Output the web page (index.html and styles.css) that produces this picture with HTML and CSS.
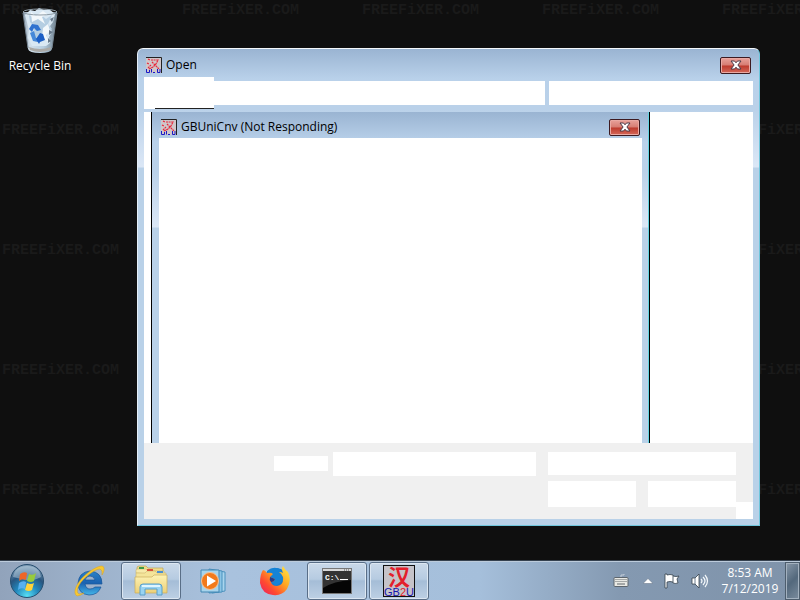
FILE: index.html
```html
<!DOCTYPE html>
<html lang="en">
<head>
    <meta charset="UTF-8">
    <meta name="viewport" content="width=device-width, initial-scale=1.0">
    <title>GBUniCnv</title>
    <link rel="stylesheet" href="styles.css">
</head>
<body>

<!-- shared icons -->
<svg class="defs" aria-hidden="true">
    <defs>
        <linearGradient id="bin" x1="0" x2="1" y1="0" y2="0">
            <stop offset="0" stop-color="#8d9fb0"/><stop offset=".2" stop-color="#d2e0eb"/>
            <stop offset=".6" stop-color="#b7cee0"/><stop offset="1" stop-color="#70828f"/>
        </linearGradient>
        <radialGradient id="orb" cx=".5" cy=".95" r=".9">
            <stop offset="0" stop-color="#58e0f5"/><stop offset=".4" stop-color="#2286bb"/>
            <stop offset=".7" stop-color="#28557f"/><stop offset="1" stop-color="#7c9bb5"/>
        </radialGradient>
        <linearGradient id="ie" x1="0" x2="0" y1="0" y2="1">
            <stop offset="0" stop-color="#2b83c9"/><stop offset=".5" stop-color="#1b62b0"/><stop offset="1" stop-color="#43b5e8"/>
        </linearGradient>
        <linearGradient id="folder" x1="0" x2="0" y1="0" y2="1">
            <stop offset="0" stop-color="#fdf3b5"/><stop offset="1" stop-color="#ecd078"/>
        </linearGradient>
        <linearGradient id="fox" x1="1" x2="0" y1="0" y2="1">
            <stop offset="0" stop-color="#fff04a"/><stop offset=".4" stop-color="#ffa522"/>
            <stop offset=".7" stop-color="#ff4a30"/><stop offset="1" stop-color="#e81a68"/>
        </linearGradient>
        <symbol id="app" viewBox="0 0 16 16">
            <rect width="16" height="16" fill="#d0c6c9"/>
            <path d="M0 .5H15.5V16" fill="none" stroke="#222"/>
            <path d="M2 2l2 1M1 6l2 1M5 3h7l-2 4-3 3-4 2M6 5l3 3 4 4M2 11l3-3" fill="none" stroke="#e8283c" stroke-width="1.2" stroke-dasharray="2 .6"/>
            <path d="M.5 12v3.500h3V13M5.500 12v3.500M7 15.500h2M11.500 12v3.500h2.500V12" fill="none" stroke="#1a1ac8"/>
        </symbol>
        <symbol id="cross" viewBox="0 0 12 10">
            <path d="M1 1h3.500L6 2.800 7.500 1H11L7.900 5 11 9H7.500L6 7.200 4.500 9H1l3.100-4z" fill="#fff" stroke="#4b3a48" stroke-width="1"/>
        </symbol>
    </defs>
</svg>

<main class="desktop">
    <div class="wallpaper" aria-hidden="true">
        <span>FREEFiXER.COM</span><span>FREEFiXER.COM</span><span>FREEFiXER.COM</span><span>FREEFiXER.COM</span><span>FREEFiXER.COM</span>
        <span>FREEFiXER.COM</span><span class="last">FREEFiXER.COM</span>
        <span>FREEFiXER.COM</span><span class="last">FREEFiXER.COM</span>
        <span>FREEFiXER.COM</span><span class="last">FREEFiXER.COM</span>
        <span>FREEFiXER.COM</span><span class="last">FREEFiXER.COM</span>
    </div>

    <a class="shortcut" href="#">
        <svg width="38" height="46" viewBox="0 0 38 46" aria-hidden="true">
            <path d="M2 4L7 41Q8 45 19 45T31 41L36 4Z" fill="url(#bin)"/>
            <path d="M4 7l5-5 5 1 4-3 5 2 5-1 6 5-2 8-3 4 2 6-3 5 1 6-4 3H11L7 30l1-8z" fill="#d9e8f3"/>
            <path d="M8 7l6 4 5-5 6 5 6-4-4 9 4 5-6 4 2 8-7-4-5 5-4-7 3-8-5-5z" fill="#b5cee2"/>
            <path d="M10 4l5 4 7-5 4 3-5 3 3 7-7-5-6 3zM22 20l5-4 2 7-4 4 3 7-7-4z" fill="#f3f8fb"/>
            <path d="M29 11l4-2-2 5zM28 22l4 2-4 3zM27 30l3 3-3 2z" fill="#67798a"/>
            <path d="M8 21l3-5 6 1 3 5-4 1-3-3-2 4z" fill="#2f72cf"/>
            <path d="M9 25l4-2 2 7 3 1-1 3-5-1z" fill="#4688d8"/>
            <path d="M15 31l4-6 3 1 2 6-5 2-1 2z" fill="#1d5fc5"/>
            <path d="M8 39q11 4 22 0l-1 3q-10 4-20 0z" fill="#aaa9a6"/>
            <ellipse cx="19" cy="4" rx="17" ry="3" fill="none" stroke="#8f9ca6"/>
            <path d="M2 5l5 35M36 5l-5 35" stroke="#748390" fill="none"/>
        </svg>
        <span>Recycle Bin</span>
    </a>

    <section class="window">
        <header class="titlebar">
            <svg class="app-icon" aria-hidden="true"><use href="#app"/></svg>
            <h1 class="title">Open</h1>
            <button class="close" aria-label="Close"><svg width="12" height="10" aria-hidden="true"><use href="#cross"/></svg></button>
        </header>
        <div class="toolbar">
            <div class="nav"><span class="nav-line"></span></div>
            <input class="address" type="text" aria-label="Address">
            <input class="search" type="text" aria-label="Search">
        </div>
        <div class="content">
            <section class="dialog">
                <header class="titlebar dialog-titlebar">
                    <svg class="app-icon" aria-hidden="true"><use href="#app"/></svg>
                    <h2 class="title">GBUniCnv (Not Responding)</h2>
                    <button class="close" aria-label="Close"><svg width="12" height="10" aria-hidden="true"><use href="#cross"/></svg></button>
                </header>
                <div class="dialog-body"></div>
            </section>
        </div>
        <footer class="footer">
            <label class="file-label" for="filename"></label>
            <input class="file-name" id="filename" type="text" aria-label="File name">
            <div class="actions">
                <select class="file-type" aria-label="File type"><option></option></select>
                <button class="action" aria-label="Open"></button>
                <button class="action" aria-label="Cancel"></button>
            </div>
            <div class="grip"></div>
        </footer>
    </section>
</main>

<nav class="taskbar">
    <button class="start" aria-label="Start">
        <svg width="36" height="36" viewBox="0 0 36 36" aria-hidden="true">
            <circle cx="18" cy="18" r="16.500" fill="url(#orb)" stroke="#284f70"/>
            <path d="M4 14Q6 3 18 3T32 14Q24 18 18 17T4 14Z" fill="#d8e9f3" opacity=".4"/>
            <path d="M11 11q4-3 7-1l-1 7q-4-2-7 1z" fill="#ee6526"/>
            <path d="M20 11q4 2 7-1l-2 8q-3 2-7 0z" fill="#97cb3d"/>
            <path d="M10 20q4-3 7-1l-1 7q-4-2-7 1z" fill="#58b0ef"/>
            <path d="M18 20q4 2 7 0l-2 7q-3 2-7 0z" fill="#ffd23a"/>
        </svg>
    </button>
    <button class="task" aria-label="Internet Explorer">
        <svg width="34" height="34" viewBox="0 0 34 34" aria-hidden="true">
            <path d="M30 20H13q1 5 5 5 3 0 5-2h6q-3 8-12 8Q6 30 6 19 7 8 18 7q12 1 12 13zM13 16h10q-1-4-5-4t-5 4z" fill="url(#ie)" stroke="#17549a" stroke-width=".7" fill-rule="evenodd"/>
            <path d="M5 32C-1 28 7 15 17 8S33 0 32 6q0 2-2 5 1-5-2-6-5 0-14 8C6 20 3 28 7 30q2 0 5-1-4 3-7 3z" fill="#f7c832" stroke="#d9a21e" stroke-width=".5"/>
        </svg>
    </button>
    <button class="task open" aria-label="Windows Explorer">
        <svg width="34" height="32" viewBox="0 0 34 32" aria-hidden="true">
            <path d="M3 27V3q0-2 2-2h7l2 2h15v24z" fill="#efdc8c" stroke="#bda354" stroke-width=".7"/>
            <path d="M2 8V5q0-1 2-1h8l2 2h16v4z" fill="#f7eaa9" stroke="#c6ad60" stroke-width=".5"/>
            <path d="M2 8h9l2-2h8l2 2h9v19H2z" fill="#f4e49a" stroke="#c6ad60" stroke-width=".5"/>
            <path d="M5 2h5v2H5z" fill="#3e9a47"/><path d="M13 4h6v2h-6z" fill="#d9503a"/><path d="M23 6h6v2h-6z" fill="#4a8fd0"/>
            <path d="M1 12h17l2-2h13v18H1z" fill="url(#folder)" stroke="#c9ae5d" stroke-width=".7"/>
            <path d="M6 30v-8q0-3 3-3h16q3 0 3 3v8h-5v-6H11v6z" fill="#98d3f1" stroke="#5a9fca"/>
            <path d="M8 21h18" stroke="#dff5ff" stroke-width="2"/>
        </svg>
    </button>
    <button class="task" aria-label="Windows Media Player">
        <svg width="30" height="28" viewBox="0 0 30 28" aria-hidden="true">
            <path d="M14 3l13 2v19l-13 2z" fill="#a9d5ee" stroke="#4b91bd"/>
            <path d="M11 2l13 2v21l-13 1z" fill="#8cc5e6" stroke="#4b91bd"/>
            <path d="M3 3h18v22H3z" fill="#a7d4ec" stroke="#4387b3"/>
            <circle cx="12" cy="14" r="8.500" fill="#f27a1b" stroke="#f8c293"/>
            <path d="M9 8.500v11l9-5.500z" fill="#fff"/>
        </svg>
    </button>
    <button class="task" aria-label="Firefox">
        <svg width="32" height="32" viewBox="0 0 32 32" aria-hidden="true">
            <circle cx="17" cy="15" r="12" fill="#1979cb"/>
            <path d="M8 6Q15 0 22 5l3 10-8 6-8-6z" fill="#1583d6"/>
            <path d="M4 5q2 0 4 3 4-1 6 1l-3 3 5 2q-1 3-4 3 1 4 6 4 7-1 6-9-1-3-4-5 3 0 4 1-2-4 0-7 2 4 5 6 4 9-1 17-5 7-14 6Q3 29 1 18 1 9 4 5z" fill="url(#fox)"/>
            <path d="M11 12l5 2q-1 3-4 3-2-2-1-5z" fill="#273a8b"/>
        </svg>
    </button>
    <button class="task open" aria-label="Command Prompt">
        <svg width="30" height="26" viewBox="0 0 30 26" aria-hidden="true">
            <rect x=".5" y=".5" width="29" height="25" fill="#050505" stroke="#777"/>
            <path d="M1 1h28v2H1z" fill="#d8d8d8"/><path d="M22 2h6" stroke="#555" stroke-dasharray="1 1"/>
            <path d="M1 3h28v9Q12 13 1 20z" fill="#333"/>
            <text class="prompt" x="3" y="12">C:\</text>
            <path d="M18 11.500h8" stroke="#fff"/>
        </svg>
    </button>
    <button class="task open" aria-label="GBUniCnv">
        <svg width="32" height="32" viewBox="0 0 32 32" aria-hidden="true">
            <rect x=".5" y=".5" width="31" height="31" fill="#c5c3c9" stroke="#111"/>
            <text class="han" x="5" y="20">汉</text>
            <text class="gb" x="1" y="31">GB<tspan class="two">2</tspan>U</text>
        </svg>
    </button>

    <div class="tray">
        <button class="tray-icon" aria-label="Keyboard">
            <svg width="16" height="14" viewBox="0 0 16 14" aria-hidden="true">
                <path d="M8 3V1h3V0" fill="none" stroke="#c5ced8"/>
                <rect x="1" y="3.500" width="14" height="9" rx="1" fill="#e9e9e4" stroke="#5e666d"/>
                <path d="M2.500 5.500h11M2.500 7.500h11" stroke="#60666b" stroke-dasharray="1 1"/><path d="M4 10h8" stroke="#60666b"/>
            </svg>
        </button>
        <button class="tray-icon" aria-label="Show hidden icons">
            <svg width="10" height="6" viewBox="0 0 10 6" aria-hidden="true"><path d="M0 5.500l5-5 5 5z" fill="#fff" stroke="#5d6d80" stroke-width=".5"/></svg>
        </button>
        <button class="tray-icon" aria-label="Action Center">
            <svg width="16" height="16" viewBox="0 0 16 16" aria-hidden="true">
                <path d="M1 1h2v1q3-1 6 0v1q3 1 6 0l-2 3 1 4q-3 1-5 0V9q-3-1-6 0v6H1z" fill="#fff" stroke="#35414d" stroke-width=".8"/>
                <path d="M9 3v6" stroke="#58646f"/>
            </svg>
        </button>
        <button class="tray-icon" aria-label="Volume">
            <svg width="18" height="16" viewBox="0 0 18 16" aria-hidden="true">
                <path d="M1 5h3l4-4v14l-4-4H1z" fill="#fff" stroke="#35414d" stroke-width=".8"/>
                <path d="M4 5v6" stroke="#718090"/>
                <path d="M10 6q2 2 0 4M12 4q4 4 0 8M14 2q5 6 0 12" fill="none" stroke="#f4f8fb" stroke-width="1.200"/>
            </svg>
        </button>
    </div>
    <button class="clock"><span>8:53 AM</span><span>7/12/2019</span></button>
    <button class="show-desktop" aria-label="Show desktop"></button>
</nav>

</body>
</html>
```
FILE: styles.css
```css
* {
    box-sizing: border-box;
}
body {
    margin: 0;
    height: 100vh;
    display: flex;
    flex-direction: column;
    overflow: hidden;
    background: #0f0f0f;
    color: #000;
    font: 12px/16px "Open Sans", "Noto Sans", "Noto Sans CJK SC", sans-serif;
}
button, input, select {
    margin: 0;
    padding: 0;
    border: 0;
    border-radius: 0;
    background: none;
    font: inherit;
    color: inherit;
    appearance: none;
}
svg {
    display: block;
    flex: none;
}
.defs {
    position: absolute;
    width: 0;
    height: 0;
}

/* Desktop */
.desktop {
    position: relative;
    flex: 1;
    overflow: hidden;
}
.wallpaper {
    position: absolute;
    top: 0;
    left: 2px;
    display: grid;
    grid-template-columns: repeat(5, 180px);
    grid-auto-rows: 120px;
    color: #1a1a1a;
    font: bold 15px/22px "Liberation Mono", monospace;
}
.last {
    grid-column: 5;
}
.shortcut {
    position: absolute;
    top: 8px;
    left: 2px;
    width: 76px;
    display: flex;
    flex-direction: column;
    align-items: center;
    gap: 4px;
    color: #fff;
    text-decoration: none;
    text-shadow: 0 1px 2px #000;
}

/* Windows */
.window {
    position: absolute;
    top: 48px;
    right: 40px;
    bottom: 34px;
    left: 137px;
    display: flex;
    flex-direction: column;
    padding: 0 6px 6px;
    border: 1px solid #6fc6dc;
    border-top-color: #f4f8fc;
    border-left-color: #e4eef8;
    border-radius: 6px 6px 0 0;
    background: linear-gradient(#9ab4d2 0, #b9d1ea 30px, #bad1e9 60px, #dbe7f6 118px, #b9d1e8 119px);
}
.titlebar {
    display: flex;
    align-items: center;
    height: 28px;
    padding: 4px 2px 0;
    flex: none;
}
.app-icon {
    width: 16px;
    height: 16px;
}
.title {
    flex: 1;
    margin: 0 4px;
    font-size: 12px;
    font-weight: normal;
    line-height: 16px;
}
.close {
    display: flex;
    align-items: center;
    justify-content: center;
    width: 31px;
    height: 17px;
    border: 1px solid #3d1a20;
    border-radius: 2px;
    box-shadow: inset 0 0 0 1px #eaa9a3;
    background: linear-gradient(#e9a29b, #d77c72 48%, #bd3a2d 52%, #d4695a);
}
.toolbar {
    display: flex;
    align-items: center;
    height: 32px;
    margin-bottom: 3px;
    flex: none;
}
.nav {
    align-self: stretch;
    display: flex;
    align-items: flex-end;
    width: 70px;
    padding-left: 11px;
    background: #fff;
}
.nav-line {
    flex: 1;
    height: 1px;
    background: #222;
}
.address, .search {
    min-width: 0;
    height: 24px;
    background: #fff;
}
.address {
    flex: 1;
    margin-right: 4px;
}
.search {
    width: 204px;
}
.content {
    flex: 1;
    display: flex;
    min-height: 0;
    padding: 0 103px 0 7px;
    background: #fff;
}
.dialog {
    flex: 1;
    display: flex;
    flex-direction: column;
    padding: 0 7px;
    border: solid #000;
    border-width: 0 1px;
    box-shadow: inset -1px 0 #65d5e3;
    background: linear-gradient(#9ab4d2 0, #b9d1ea 30px, #bad1e9 60px, #dbe7f6 115px, #b9d1e8 116px);
}
.dialog-titlebar {
    height: 26px;
}
.dialog-body {
    flex: 1;
    background: #fff;
}
.footer {
    display: flex;
    align-items: flex-start;
    justify-content: flex-end;
    height: 76px;
    padding-top: 9px;
    flex: none;
    background: #f0f0f0;
}
.file-label {
    width: 54px;
    height: 15px;
    margin: 4px 5px 0 0;
    background: #fff;
}
.file-name {
    width: 203px;
    height: 24px;
    margin-right: 12px;
    background: #fff;
}
.actions {
    display: grid;
    grid-template-columns: 88px 88px;
    gap: 6px 12px;
}
.file-type {
    grid-column: 1 / 3;
    height: 23px;
    background: #fff;
}
.action {
    height: 26px;
    background: #fff;
}
.grip {
    align-self: flex-end;
    width: 17px;
    height: 17px;
    background: #fff;
}

/* Taskbar */
.taskbar {
    display: flex;
    gap: 2px;
    height: 40px;
    padding-top: 1px;
    flex: none;
    border-top: 1px solid #35414f;
    box-shadow: inset 0 1px #bccbdb;
    background: linear-gradient(90deg, #91a3bb 0, #9eb3cc 100px, #a9c2de 230px, #a5bfdb 480px, #8499b1 620px, #7f93aa 100%);
}
.start {
    display: flex;
    align-items: center;
    justify-content: center;
    width: 54px;
    margin-right: 3px;
}
.task {
    display: flex;
    align-items: center;
    justify-content: center;
    width: 60px;
}
.open {
    border: 1px solid #596e87;
    border-radius: 3px;
    box-shadow: inset 0 0 0 1px #dce7f2;
    background: linear-gradient(#cad9e9, #b6cbe1 45%, #a5bdd7 50%, #bdd0e4);
}
.prompt {
    fill: #fff;
    font: bold 8px "Liberation Mono", monospace;
}
.han {
    fill: #e3202c;
    font: bold 22px "Noto Sans CJK SC", sans-serif;
}
.gb {
    fill: #1616b0;
    font: 11px "Liberation Sans", sans-serif;
}
.two {
    fill: #e3202c;
}
.tray {
    display: flex;
    align-items: center;
    gap: 11px;
    margin-left: auto;
    margin-right: 6px;
}
.tray-icon:first-child {
    margin-right: 3px;
}
.clock {
    display: flex;
    flex-direction: column;
    justify-content: center;
    align-items: center;
    width: 66px;
    color: #fff;
}
.show-desktop {
    width: 15px;
    border: 1px solid #4d5d6d;
    box-shadow: inset 0 0 0 1px #a3b1bf;
    background: linear-gradient(135deg, #8898a9, #53687c 50%, #7b8c9e);
}
```
